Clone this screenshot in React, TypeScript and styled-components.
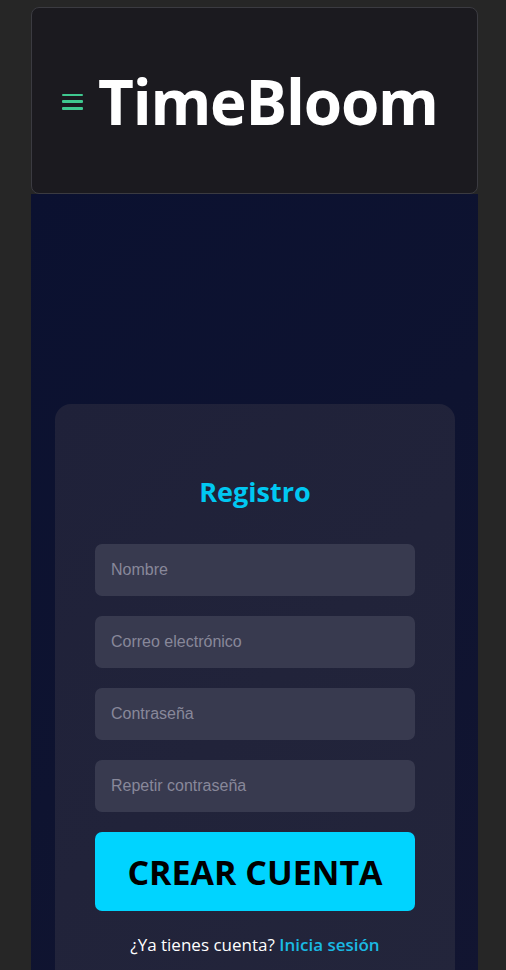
import React from 'react';
import styled, { createGlobalStyle } from 'styled-components';

const GlobalStyle = createGlobalStyle`
  html, body {
    margin: 0;
    padding: 0;
    background: #262626;
    height: 100%;
    overflow: hidden;
  }
  * { box-sizing: border-box; }
`;

const Page = styled.div`
  padding: 7px 28px 0 31px;
  min-height: 100vh;
  display: flex;
  flex-direction: column;
`;

const Header = styled.header`
  height: 187px;
  background: #1b1a1f;
  border: 1px solid #3b3b41;
  border-radius: 8px;
  display: flex;
  align-items: center;
  gap: 15px;
  padding: 0 0 0 30px;
`;

const MenuButton = styled.button`
  background: none;
  border: none;
  padding: 0;
  width: 21px;
  height: 16px;
  display: flex;
  flex-direction: column;
  justify-content: space-between;
  cursor: pointer;
  margin-top: 2px;

  span {
    display: block;
    height: 2.5px;
    background: #3fc88f;
    border-radius: 1px;
  }
`;

const Logo = styled.h1`
  margin: 0;
  font-family: 'Open Sans', 'Noto Sans', sans-serif;
  font-weight: 700;
  font-size: 62px;
  letter-spacing: -1.2px;
  color: #ffffff;
  line-height: 1;
`;

const Main = styled.main`
  flex: 1;
  background: linear-gradient(135deg, #0b1130 0%, #0e1330 50%, #121531 100%);
  padding: 210px 23px 0 24px;
`;

const Card = styled.section`
  background: linear-gradient(135deg, #1f2139 0%, #23253b 100%);
  border-radius: 16px;
  padding: 70px 40px 40px;
  display: flex;
  flex-direction: column;
  align-items: stretch;
`;

const Title = styled.h2`
  margin: 0 0 34px;
  text-align: center;
  font-family: 'Open Sans', 'Noto Sans', sans-serif;
  font-weight: 700;
  font-size: 27px;
  color: #00c8f2;
  line-height: 36px;
`;

const Form = styled.form`
  display: flex;
  flex-direction: column;
  gap: 20px;
`;

const Input = styled.input`
  height: 52px;
  border: none;
  border-radius: 7px;
  background: #383a4f;
  padding: 0 16px;
  font-family: 'Liberation Sans', Arial, sans-serif;
  font-size: 16px;
  color: #ffffff;
  outline: none;

  &::placeholder {
    color: #88889a;
  }
`;

const SubmitButton = styled.button`
  height: 79px;
  border: none;
  border-radius: 7px;
  background: #00d4ff;
  color: #000000;
  font-family: 'Open Sans', 'Noto Sans', sans-serif;
  font-weight: 700;
  font-size: 34px;
  cursor: pointer;
`;

const Footer = styled.p`
  margin: 22px 0 0;
  text-align: center;
  font-family: 'Open Sans', 'Noto Sans', sans-serif;
  font-size: 17px;
  color: #ffffff;

  a {
    color: #1ab9e3;
    font-weight: 600;
    text-decoration: none;
  }
`;

export default function App() {
  return (
    <>
      <GlobalStyle />
      <Page>
        <Header>
          <MenuButton aria-label="Menú">
            <span />
            <span />
            <span />
          </MenuButton>
          <Logo>TimeBloom</Logo>
        </Header>
        <Main>
          <Card>
            <Title>Registro</Title>
            <Form onSubmit={(e) => e.preventDefault()}>
              <Input type="text" placeholder="Nombre" />
              <Input type="email" placeholder="Correo electrónico" />
              <Input type="password" placeholder="Contraseña" />
              <Input type="password" placeholder="Repetir contraseña" />
              <SubmitButton type="submit">CREAR CUENTA</SubmitButton>
            </Form>
            <Footer>
              ¿Ya tienes cuenta? <a href="#">Inicia sesión</a>
            </Footer>
          </Card>
        </Main>
      </Page>
    </>
  );
}
